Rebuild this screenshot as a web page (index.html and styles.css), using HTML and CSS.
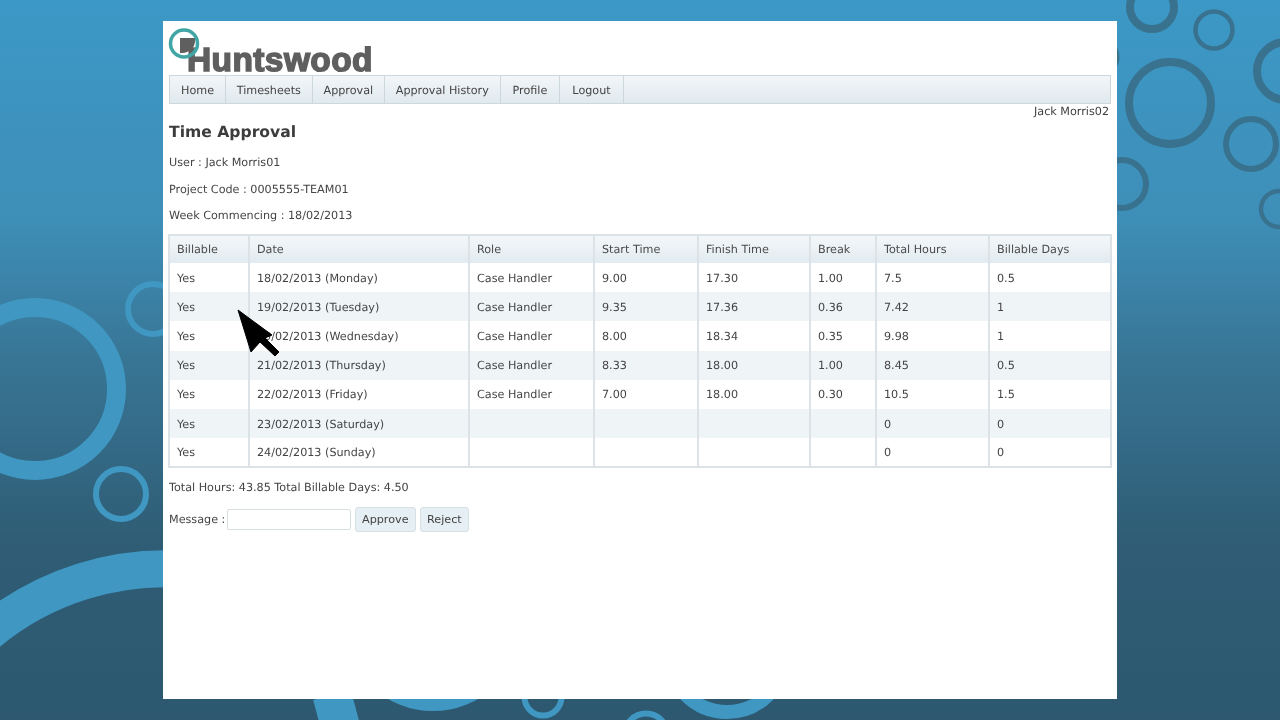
FILE: index.html
```html
<!DOCTYPE html>
<html lang="en">
<head>
<meta charset="utf-8">
<title>Time Approval</title>
<link rel="stylesheet" href="styles.css">
</head>
<body>
<svg class="backdrop" width="1280" height="720" viewBox="0 0 1280 720" aria-hidden="true">
  <g class="ring-light">
    <circle cx="35" cy="389" r="81.500" stroke-width="19"/>
    <circle cx="121" cy="494" r="25" stroke-width="6"/>
    <circle cx="153" cy="309" r="25" stroke-width="6"/>
    <path d="M-20 639.500 A278 278 0 0 1 200 571" stroke-width="37"/>
    <path d="M332 695 L340 725" stroke-width="39"/>
    <circle cx="433" cy="621" r="81" stroke-width="18"/>
    <circle cx="543" cy="697" r="18.500" stroke-width="6"/>
    <circle cx="646" cy="735" r="21.500" stroke-width="6"/>
    <circle cx="727" cy="654" r="58" stroke-width="14"/>
  </g>
  <g class="ring-dark">
    <circle cx="1152" cy="7" r="22" stroke-width="8"/>
    <circle cx="1214" cy="30" r="18.500" stroke-width="4.500"/>
    <circle cx="1170" cy="103" r="41" stroke-width="8"/>
    <circle cx="1286" cy="71" r="29" stroke-width="8"/>
    <circle cx="1251" cy="144" r="25" stroke-width="6"/>
    <circle cx="1122" cy="184" r="24" stroke-width="6"/>
    <circle cx="1279" cy="209" r="18" stroke-width="4.500"/>
    <circle cx="1100" cy="57" r="17" stroke-width="5"/>
  </g>
</svg>
<main class="card">
  <header class="logo">
    <span class="logo-text">Huntswood</span>
    <svg class="logo-mark" width="34" height="34" viewBox="0 0 34 34" aria-hidden="true">
      <path class="logo-leaf" d="M13 11H28V14C28 21 22 26 15 26H13Z"/>
      <circle cx="17" cy="16.500" r="13.500" class="logo-ring"/>
    </svg>
  </header>
  <nav class="nav">
    <a class="nav-item">Home</a>
    <a class="nav-item">Timesheets</a>
    <a class="nav-item">Approval</a>
    <a class="nav-item">Approval History</a>
    <a class="nav-item nav-item-wide">Profile</a>
    <a class="nav-item nav-item-wide">Logout</a>
  </nav>
  <div class="signed-in">Jack Morris02</div>
  <h1 class="title">Time Approval</h1>
  <p class="meta">User : Jack Morris01</p>
  <p class="meta">Project Code : 0005555-TEAM01</p>
  <p class="meta">Week Commencing : 18/02/2013</p>
  <table class="grid">
    <colgroup>
      <col class="c1"><col class="c2"><col class="c3"><col class="c4"><col class="c5"><col class="c6"><col class="c7"><col class="c8">
    </colgroup>
    <thead>
      <tr><th>Billable</th><th>Date</th><th>Role</th><th>Start Time</th><th>Finish Time</th><th>Break</th><th>Total Hours</th><th>Billable Days</th></tr>
    </thead>
    <tbody>
      <tr><td>Yes</td><td>18/02/2013 (Monday)</td><td>Case Handler</td><td>9.00</td><td>17.30</td><td>1.00</td><td>7.5</td><td>0.5</td></tr>
      <tr><td>Yes</td><td>19/02/2013 (Tuesday)</td><td>Case Handler</td><td>9.35</td><td>17.36</td><td>0.36</td><td>7.42</td><td>1</td></tr>
      <tr><td>Yes</td><td>20/02/2013 (Wednesday)</td><td>Case Handler</td><td>8.00</td><td>18.34</td><td>0.35</td><td>9.98</td><td>1</td></tr>
      <tr><td>Yes</td><td>21/02/2013 (Thursday)</td><td>Case Handler</td><td>8.33</td><td>18.00</td><td>1.00</td><td>8.45</td><td>0.5</td></tr>
      <tr><td>Yes</td><td>22/02/2013 (Friday)</td><td>Case Handler</td><td>7.00</td><td>18.00</td><td>0.30</td><td>10.5</td><td>1.5</td></tr>
      <tr><td>Yes</td><td>23/02/2013 (Saturday)</td><td></td><td></td><td></td><td></td><td>0</td><td>0</td></tr>
      <tr><td>Yes</td><td>24/02/2013 (Sunday)</td><td></td><td></td><td></td><td></td><td>0</td><td>0</td></tr>
    </tbody>
  </table>
  <p class="totals">Total Hours: 43.85 Total Billable Days: 4.50</p>
  <form class="message-row">
    <label class="message-label" for="message">Message :</label>
    <input class="message-input" id="message" type="text">
    <button class="btn" type="button">Approve</button>
    <button class="btn" type="button">Reject</button>
  </form>
  <svg class="pointer" width="44" height="52" viewBox="0 0 44 52" aria-hidden="true">
    <path d="M1 2L35 27L28 30L42 44L38 48L23 34L14 44Z"/>
  </svg>
</main>
</body>
</html>
```
FILE: styles.css
```css
* { box-sizing: border-box; }
html, body { margin: 0; height: 720px; overflow: hidden; }
body {
  position: relative;
  background: linear-gradient(180deg, #3c98c6 0%, #3e8fb8 30%, #387595 50%, #2f5d75 75%, #2d586f 100%);
  font-family: "DejaVu Sans", Verdana, sans-serif;
  font-size: 11.200px;
  text-rendering: geometricPrecision;
  color: #444;
}
.backdrop { position: absolute; left: 0; top: 0; fill: none; }
.ring-light { stroke: #3f97c2; fill: none; }
.ring-dark { stroke: #39728f; fill: none; }
.card {
  position: relative;
  width: 954px;
  height: 678px;
  margin: 21px 0 0 163px;
  padding: 5px 6px 0;
  background: #fff;
  filter: blur(0.5px);
}
.logo { position: relative; height: 49px; padding: 23px 0 0 18px; }
.logo-mark { position: absolute; left: -2px; top: 1px; }
.logo-ring { fill: none; stroke: #41a5a5; stroke-width: 3.500; }
.logo-leaf { fill: #5f5f5f; }
.logo-text {
  display: block;
  font-family: "Liberation Sans", Arial, sans-serif;
  font-weight: 700;
  font-size: 33.500px;
  line-height: 24px;
  letter-spacing: 0.4px;
  color: #5f5f5f;
  -webkit-text-stroke: 1.500px #5f5f5f;
}
.nav {
  display: flex;
  width: 942px;
  height: 29px;
  background: linear-gradient(180deg, #f2f6f8 0%, #e0e9ee 100%);
  border: 1px solid #ccd8de;
}
.nav-item {
  padding: 0 10.800px;
  line-height: 29px;
  border-right: 1px solid #ccd8de;
  color: #444;
}
.nav-item:first-child { padding-left: 11px; }
.nav-item-wide { padding: 0 12px; }
.signed-in { width: 940px; text-align: right; line-height: 16px; color: #3f3f3f; }
.title {
  margin: 1px 0 0;
  font-size: 15.600px;
  line-height: 22px;
  font-weight: 700;
  color: #3c3c3c;
}
.meta { margin: 0; line-height: 16px; }
.meta + .meta { padding-top: 10.500px; }
.title + .meta { padding-top: 12px; }
.grid {
  width: 942px;
  margin: 10px 0 0 -1px;
  border-collapse: collapse;
  table-layout: fixed;
  border: 2px solid #dbe3e7;
}
.c1 { width: 80px; }
.c2 { width: 220px; }
.c3 { width: 125px; }
.c4 { width: 104px; }
.c5 { width: 112px; }
.c6 { width: 66px; }
.c7 { width: 113px; }
.c8 { width: 122px; }
.grid th, .grid td {
  padding: 1px 7px 0;
  text-align: left;
  font-weight: 400;
  border-left: 2px solid #dbe3e7;
  white-space: nowrap;
}
.grid th {
  height: 28px;
  padding-top: 0;
  background: linear-gradient(180deg, #f3f7f9 0%, #e2ebf0 100%);
  color: #4a4a4a;
}
.grid td { height: 29.200px; background: #fff; }
.grid tbody tr:nth-child(even) td { background: #eff4f7; }
.totals { margin: 0; padding-top: 12px; line-height: 16px; }
.message-row { display: flex; align-items: center; gap: 3.500px; margin-top: 11px; }
.message-label { width: 54.500px; white-space: nowrap; }
.message-input {
  width: 124px;
  height: 21px;
  padding: 0;
  background: #fff;
  border: 1px solid #d7dfe3;
  border-radius: 2px;
}
.btn {
  height: 25px;
  padding: 0 6.500px;
  font: inherit;
  color: #444;
  background: #e6eff3;
  border: 1px solid #d5dfe4;
  border-radius: 3px;
}
.pointer {
  position: absolute;
  left: 74px;
  top: 287px;
  fill: #000;
  stroke: #000;
  stroke-width: 1;
}
```
